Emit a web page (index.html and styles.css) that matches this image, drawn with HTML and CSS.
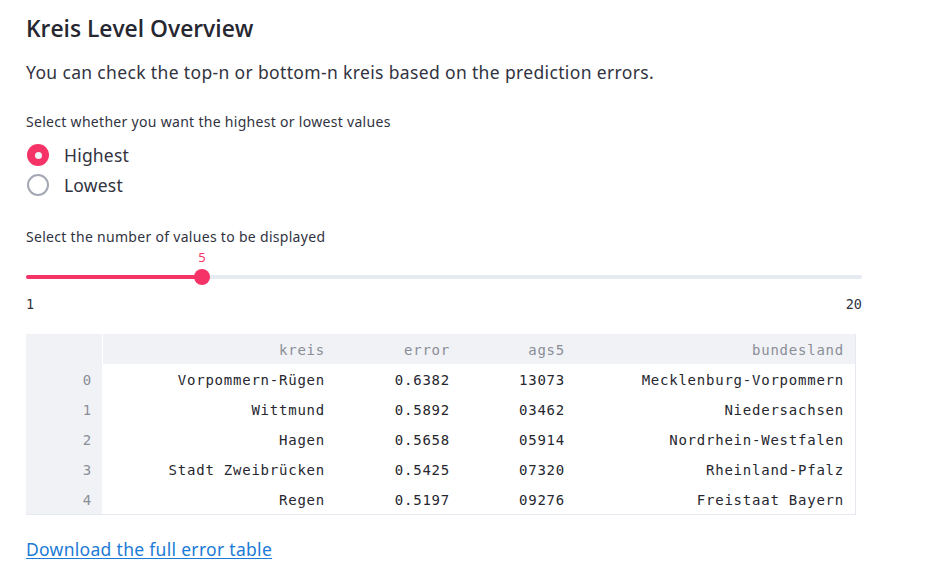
FILE: index.html
```html
<!DOCTYPE html>
<html>
<head>
<meta charset="utf-8">
<link rel="stylesheet" href="styles.css">
</head>
<body>
<main class="main">
  <h2 class="title">Kreis Level Overview</h2>
  <p class="intro">You can check the top-n or bottom-n kreis based on the prediction errors.</p>

  <div class="label label-radio">Select whether you want the highest or lowest values</div>
  <div class="radio-group">
    <div class="radio-row"><span class="radio checked"></span><span class="radio-text">Highest</span></div>
    <div class="radio-row"><span class="radio"></span><span class="radio-text">Lowest</span></div>
  </div>

  <div class="label label-slider">Select the number of values to be displayed</div>
  <div class="slider">
    <div class="slider-value-row"><span class="slider-value" style="left: 21.05%">5</span></div>
    <div class="slider-track-area">
      <div class="slider-track">
        <div class="slider-fill" style="width: 21.05%"></div>
      </div>
      <span class="slider-thumb" style="left: 21.05%"></span>
    </div>
    <div class="slider-minmax"><span>1</span><span>20</span></div>
  </div>

  <table class="df">
    <thead>
      <tr><th class="idx"></th><th class="c-kreis">kreis</th><th class="c-error">error</th><th class="c-ags">ags5</th><th class="c-land">bundesland</th></tr>
    </thead>
    <tbody>
      <tr><th class="idx">0</th><td>Vorpommern-Rügen</td><td>0.6382</td><td>13073</td><td>Mecklenburg-Vorpommern</td></tr>
      <tr><th class="idx">1</th><td>Wittmund</td><td>0.5892</td><td>03462</td><td>Niedersachsen</td></tr>
      <tr><th class="idx">2</th><td>Hagen</td><td>0.5658</td><td>05914</td><td>Nordrhein-Westfalen</td></tr>
      <tr><th class="idx">3</th><td>Stadt Zweibrücken</td><td>0.5425</td><td>07320</td><td>Rheinland-Pfalz</td></tr>
      <tr><th class="idx">4</th><td>Regen</td><td>0.5197</td><td>09276</td><td>Freistaat Bayern</td></tr>
    </tbody>
  </table>

  <a class="download" href="#">Download the full error table</a>
</main>
</body>
</html>
```

FILE: styles.css
```css
html, body {
  margin: 0;
  padding: 0;
  background: #ffffff;
}

.main {
  width: 836px;
  padding-left: 26px;
  font-family: "Noto Sans", "Open Sans", sans-serif;
  color: #31333f;
  display: flex;
  flex-direction: column;
  align-items: stretch;
}

.title {
  margin: 12px 0 0;
  font-family: "Open Sans", "Noto Sans", sans-serif;
  font-size: 22.8px;
  line-height: 34px;
  font-weight: 600;
  color: #262730;
}

.intro {
  margin: 13px 0 0;
  font-size: 17.5px;
  letter-spacing: 0.35px;
  line-height: 26px;
  color: #31333f;
}

.label {
  font-size: 14px;
  letter-spacing: 0.3px;
  line-height: 20px;
  color: #31333f;
}

.label-radio {
  margin-top: 27px;
}

.radio-group {
  margin-top: 8px;
  display: flex;
  flex-direction: column;
}

.radio-row {
  height: 30px;
  display: flex;
  align-items: center;
}

.radio {
  box-sizing: border-box;
  width: 22px;
  height: 22px;
  margin-left: 1px;
  border-radius: 50%;
  border: 2px solid #a3a8b4;
  background: #fff;
  display: inline-flex;
  align-items: center;
  justify-content: center;
}

.radio.checked {
  border: none;
  background: #f63366;
}

.radio.checked::after {
  content: "";
  width: 7px;
  height: 7px;
  border-radius: 50%;
  background: #f0f2f6;
}

.radio-text {
  margin-left: 15px;
  font-size: 17.5px;
  letter-spacing: 0.2px;
  color: #31333f;
}

.label-slider {
  margin-top: 27px;
}

.slider {
  display: flex;
  flex-direction: column;
}

.slider-value-row {
  position: relative;
  height: 16px;
  margin-top: 2px;
}

.slider-value {
  position: absolute;
  top: 0;
  transform: translateX(-50%);
  font-size: 13px;
  line-height: 16px;
  color: #f63366;
}

.slider-track-area {
  position: relative;
  height: 24px;
  display: flex;
  align-items: center;
}

.slider-track {
  width: 100%;
  height: 4px;
  border-radius: 2px;
  background: #e6eaf1;
  display: flex;
}

.slider-fill {
  height: 4px;
  border-radius: 2px;
  background: #f63366;
}

.slider-thumb {
  position: absolute;
  top: 4px;
  width: 16px;
  height: 16px;
  margin-left: -8px;
  border-radius: 50%;
  background: #f63366;
}

.slider-minmax {
  margin-top: 7px;
  display: flex;
  justify-content: space-between;
  font-family: "DejaVu Sans Mono", monospace;
  font-size: 13.5px;
  line-height: 16px;
  color: #31333f;
}

.df {
  margin-top: 22px;
  width: 830px;
  border-collapse: separate;
  border-spacing: 0;
  table-layout: fixed;
  font-family: "DejaVu Sans Mono", monospace;
  font-size: 14px;
  letter-spacing: 0.77px;
  border-right: 1px solid #e6e9ef;
  border-bottom: 1px solid #e6e9ef;
}

.df th,
.df td {
  box-sizing: border-box;
  height: 30px;
  line-height: 28px;
  padding: 2px 11px 0 0;
  text-align: right;
  font-weight: 400;
  white-space: nowrap;
}

.df thead th {
  background: #f0f2f6;
  color: #8b8e96;
}

.df th.idx {
  width: 77px;
  padding-right: 10px;
  background: #f0f2f6;
  color: #8b8e96;
  border-right: 1px solid #ffffff;
}

.df .c-kreis { width: 233px; }
.df .c-error { width: 125px; }
.df .c-ags { width: 115px; }

.df td {
  color: #262730;
}

.download {
  margin-top: 22px;
  align-self: flex-start;
  font-size: 17.5px;
  letter-spacing: 0.3px;
  line-height: 24px;
  color: #1c7bd6;
  text-decoration: underline;
  text-underline-offset: 2px;
}
```
